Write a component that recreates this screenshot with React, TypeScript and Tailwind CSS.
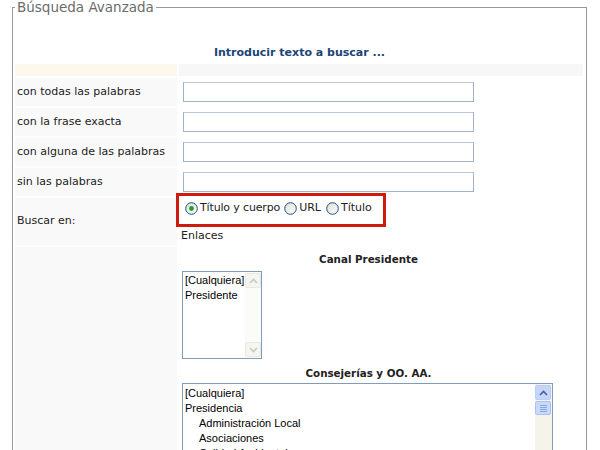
import React from 'react';

const campos = [
  'con todas las palabras',
  'con la frase exacta',
  'con alguna de las palabras',
  'sin las palabras',
];

const consejerias = [
  { t: '[Cualquiera]', sub: false },
  { t: 'Presidencia', sub: false },
  { t: 'Administración Local', sub: true },
  { t: 'Asociaciones', sub: true },
  { t: 'Calidad Ambiental', sub: true },
  { t: 'Comunicación', sub: true },
];

const Radio = ({ checked }: { checked?: boolean }) => (
  <svg width="13" height="13" viewBox="0 0 13 13" className="shrink-0">
    <defs>
      <linearGradient id="rb" x1="0" y1="0" x2="1" y2="1">
        <stop offset="0" stopColor="#dcdcd6" />
        <stop offset="1" stopColor="#ffffff" />
      </linearGradient>
    </defs>
    <circle cx="6.5" cy="6.5" r="5.8" fill="url(#rb)" stroke="#1c5180" strokeWidth="1" />
    {checked && <circle cx="6.5" cy="6.5" r="2.4" fill="#21a121" />}
  </svg>
);

const Chevron = ({ up, color }: { up?: boolean; color: string }) => (
  <svg width="9" height="6" viewBox="0 0 9 6">
    <path d={up ? 'M1 5 L4.5 1.5 L8 5' : 'M1 1 L4.5 4.5 L8 1'} fill="none" stroke={color} strokeWidth="1.6" />
  </svg>
);

const App = () => {
  return (
    <div className="h-[450px] w-[600px] overflow-hidden bg-white font-['DejaVu_Sans',sans-serif] text-[11px] text-[#222]">
      <fieldset className="ml-3 w-[575px] border border-[#999999]">
        <legend className="ml-[2px] px-[2px] text-[13.5px] leading-[14px] text-[#6b6b6b]">Búsqueda Avanzada</legend>

        <div className="p-[2px] pt-[32px]">
          <div className="pb-[4px] text-center text-[11px] font-bold leading-[14px] text-[#1b4577]">
            Introducir texto a buscar ...
          </div>
          <div className="grid grid-cols-[162px_404px] gap-[2px]">
            <div className="h-[12px] bg-[#fdf8ec]" />
            <div className="h-[12px] bg-[#f7f7f7]" />

            {campos.map((c) => (
              <React.Fragment key={c}>
                <div className="flex h-[28px] items-center bg-[#f9f9f9] pl-[2px]">{c}</div>
                <div className="flex h-[28px] items-center pl-[4px]">
                  <input
                    type="text"
                    className="h-[20px] w-[291px] border border-[#9fb3c8] border-t-[#b9c7d6] bg-white outline-none"
                  />
                </div>
              </React.Fragment>
            ))}

            <div className="flex h-[47px] items-center bg-[#f9f9f9] pl-[2px]">Buscar en:</div>
            <div className="h-[47px] pl-[2px]">
              <div className="relative flex h-[20px] items-center">
                <div className="pointer-events-none absolute left-[-5px] top-[-5px] h-[34px] w-[210px] border-[3px] border-[#d01a0f]" />
                <label className="ml-[4px] flex items-center gap-[2px] tracking-[-0.15px]">
                  <Radio checked />
                  <span>Título y cuerpo</span>
                </label>
                <label className="ml-[4px] flex items-center gap-[2px]">
                  <Radio />
                  <span>URL</span>
                </label>
                <label className="ml-[5px] flex items-center gap-[2px]">
                  <Radio />
                  <span>Título</span>
                </label>
              </div>
              <div className="mt-[11px] leading-[14px]">Enlaces</div>
            </div>

            <div className="h-[210px] bg-[#f9f9f9]" />
            <div className="w-[376px] pl-[3px]">
              <div className="pt-[5px] text-center text-[10.3px] font-bold leading-[14px]">Canal Presidente</div>
              <div className="mt-[5px] flex h-[88px] w-[80px] border border-[#7f9db9] bg-white font-['Liberation_Sans',sans-serif] text-[11px] leading-[15px] text-black">
                <div className="flex-1 pl-[2px] pt-[1px]">
                  <div>[Cualquiera]</div>
                  <div>Presidente</div>
                </div>
                <div className="flex w-[16px] flex-col justify-between bg-[#fbfbf8] py-[1px]">
                  <div className="flex h-[15px] items-center justify-center rounded-[2px] border border-[#e8e8e2] bg-[#f6f6f0]">
                    <Chevron up color="#c9c9bf" />
                  </div>
                  <div className="flex h-[15px] items-center justify-center rounded-[2px] border border-[#e8e8e2] bg-[#f6f6f0]">
                    <Chevron color="#c9c9bf" />
                  </div>
                </div>
              </div>

              <div className="mt-[7px] text-center text-[10.3px] font-bold leading-[14px]">Consejerías y OO. AA.</div>
              <div className="mt-[3px] flex h-[120px] w-[371px] border border-[#7f9db9] bg-white font-['Liberation_Sans',sans-serif] text-[11px] leading-[15px] text-black">
                <div className="flex-1 pl-[2px] pt-[2px]">
                  {consejerias.map((o) => (
                    <div key={o.t} className={o.sub ? 'pl-[14px]' : ''}>
                      {o.t}
                    </div>
                  ))}
                </div>
                <div className="flex w-[17px] flex-col bg-[#f5f4ea] py-[1px] pr-[1px]">
                  <div className="flex h-[15px] items-center justify-center rounded-[2px] border border-[#b9cdf6] bg-[#c4d6fb]">
                    <Chevron up color="#4d6185" />
                  </div>
                  <div className="mt-[1px] flex h-[14px] flex-col items-center justify-center gap-[1px] rounded-[2px] border border-[#a9c1f4] bg-[#c8d9fc]">
                    <div className="h-px w-[7px] bg-[#8aa6e0]" />
                    <div className="h-px w-[7px] bg-[#8aa6e0]" />
                    <div className="h-px w-[7px] bg-[#8aa6e0]" />
                    <div className="h-px w-[7px] bg-[#8aa6e0]" />
                  </div>
                </div>
              </div>
            </div>
          </div>
        </div>
      </fieldset>
    </div>
  );
};

export default App;
